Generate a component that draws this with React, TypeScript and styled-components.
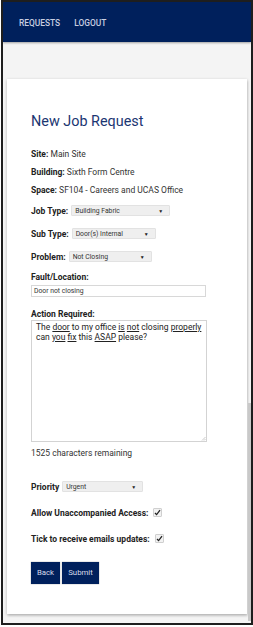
import React from "react";
import styled, { createGlobalStyle } from "styled-components";

const Global = createGlobalStyle`
  html, body { margin: 0; padding: 0; background: #ffffff; }
  body { font-family: Roboto, "Liberation Sans", Arial, sans-serif; }
  * { box-sizing: border-box; }
`;

const Frame = styled.div`
  position: relative;
  margin-left: 1px;
  width: 252px;
  height: 625px;
  border: 2px solid #1e1e1e;
  background: #f4f4f4;
  overflow: hidden;
  display: flex;
  flex-direction: column;
`;

const Thumb = styled.div`
  position: absolute;
  right: 0;
  top: 401px;
  width: 3px;
  bottom: 2px;
  background: #c9c9c9;
`;

const NavBar = styled.nav`
  height: 40px;
  flex: none;
  background: #00205c;
  display: flex;
  align-items: center;
  padding: 1px 0 0 16px;
  gap: 14px;
  box-shadow: 0 1px 2px rgba(0, 0, 0, 0.35);
`;

const NavLink = styled.span`
  color: #c9cee0;
  font-size: 8.4px;
  font-weight: 500;
`;

const Content = styled.main`
  padding: 37px 4px 9px 4px;
  flex: 1;
`;

const Card = styled.section`
  background: #ffffff;
  width: 240px;
  height: 535px;
  padding: 35px 24px 0 24px;
  box-shadow: 0 1px 3px rgba(0, 0, 0, 0.25), 1px 2px 2px rgba(0, 0, 0, 0.08);
  color: #2a2a2a;
`;

const Title = styled.h1`
  margin: 0 0 15px 0;
  font-size: 14.4px;
  line-height: 16px;
  font-weight: 400;
  color: #1b3672;
`;

const InfoRow = styled.div`
  font-size: 8.5px;
  line-height: 18px;
  color: #333;
`;

const B = styled.b`
  font-weight: 700;
  color: #222;
`;

const SelectRow = styled.div`
  display: flex;
  align-items: center;
  height: 23px;
  font-size: 8.5px;
  gap: 3px;
`;

const SelectBox = styled.div<{ $w: number }>`
  width: ${(p) => p.$w}px;
  height: 11px;
  background: #efefef;
  border: 1px solid #e2e2e2;
  border-radius: 1px;
  display: flex;
  align-items: center;
  justify-content: space-between;
  padding: 0 6px 0 3px;
  font-size: 6.8px;
  color: #333;
`;

const Arrow = styled.span`
  font-size: 5px;
  color: #222;
`;

const FieldLabel = styled.div<{ $top: number }>`
  margin-top: ${(p) => p.$top}px;
  font-size: 8.5px;
  line-height: 11px;
  font-weight: 700;
  color: #222;
`;

const TextInput = styled.div`
  margin-top: 1.5px;
  width: 175px;
  height: 12px;
  border: 1px solid #d8d8d8;
  font-size: 6.8px;
  line-height: 10px;
  padding: 0 2px;
  color: #333;
`;

const TextArea = styled.div`
  position: relative;
  width: 176px;
  height: 122px;
  border: 1px solid #d3d3d3;
  padding: 1px 4px;
  font-size: 8.5px;
  line-height: 10px;
  color: #222;
`;

const Grip = styled.svg`
  position: absolute;
  right: 0;
  bottom: 0;
`;

const U = styled.span`
  text-decoration: underline;
  text-underline-offset: 1px;
`;

const Remaining = styled.div`
  margin-top: 4.5px;
  font-size: 8.5px;
  line-height: 12px;
  color: #333;
`;

const PriorityRow = styled(SelectRow)`
  margin-top: 21px;
  height: 14px;
`;

const CheckRow = styled.div<{ $top: number }>`
  margin-top: ${(p) => p.$top}px;
  display: flex;
  align-items: center;
  height: 14px;
  gap: 5px;
  font-size: 8.5px;
  font-weight: 700;
  color: #222;
`;

const Check = styled.span`
  width: 9px;
  height: 9px;
  border: 1px solid #cfcfcf;
  background: #f2f2f2;
  border-radius: 1px;
  display: flex;
  align-items: center;
  justify-content: center;
`;

const Buttons = styled.div`
  margin-top: 16px;
  display: flex;
  gap: 2px;
`;

const Button = styled.button<{ $w: number }>`
  width: ${(p) => p.$w}px;
  height: 22px;
  background: #00205c;
  color: #d6daea;
  border: none;
  padding: 0;
  font-family: Roboto, "Liberation Sans", Arial, sans-serif;
  font-size: 7.8px;
  box-shadow: 0 0 1px rgba(0, 0, 0, 0.5);
`;

const Tick = () => (
  <Check>
    <svg width="7" height="7" viewBox="0 0 7 7">
      <path d="M1 4 L2.6 5.6 L6 1.2" fill="none" stroke="#222" strokeWidth="1.3" />
    </svg>
  </Check>
);

export default function App() {
  return (
    <>
      <Global />
      <Frame>
        <NavBar>
          <NavLink>REQUESTS</NavLink>
          <NavLink>LOGOUT</NavLink>
        </NavBar>
        <Content>
          <Card>
            <Title>New Job Request</Title>
            <InfoRow>
              <B>Site:</B> Main Site
            </InfoRow>
            <InfoRow>
              <B>Building:</B> Sixth Form Centre
            </InfoRow>
            <InfoRow>
              <B>Space:</B> SF104 - Careers and UCAS Office
            </InfoRow>
            <SelectRow>
              <B>Job Type:</B>
              <SelectBox $w={99}>
                Building Fabric<Arrow>▼</Arrow>
              </SelectBox>
            </SelectRow>
            <SelectRow>
              <B>Sub Type:</B>
              <SelectBox $w={84}>
                Door(s) Internal<Arrow>▼</Arrow>
              </SelectBox>
            </SelectRow>
            <SelectRow>
              <B>Problem:</B>
              <SelectBox $w={83}>
                Not Closing<Arrow>▼</Arrow>
              </SelectBox>
            </SelectRow>
            <FieldLabel $top={4}>Fault/Location:</FieldLabel>
            <TextInput>Door not closing</TextInput>
            <FieldLabel $top={12.5}>Action Required:</FieldLabel>
            <TextArea>
              The <U>door</U> to my office <U>is</U> <U>not</U> closing <U>properly</U> can{" "}
              <U>you</U> <U>fix</U> this <U>ASAP</U> please?
              <Grip width="5" height="5" viewBox="0 0 5 5">
                <path d="M4.5 1 L1 4.5 M4.5 3 L3 4.5" stroke="#aaa" strokeWidth="0.6" />
              </Grip>
            </TextArea>
            <Remaining>1525 characters remaining</Remaining>
            <PriorityRow>
              <B>Priority</B>
              <SelectBox $w={81}>
                Urgent<Arrow>▼</Arrow>
              </SelectBox>
            </PriorityRow>
            <CheckRow $top={12}>
              Allow Unaccompanied Access: <Tick />
            </CheckRow>
            <CheckRow $top={12}>
              Tick to receive emails updates: <Tick />
            </CheckRow>
            <Buttons>
              <Button $w={29}>Back</Button>
              <Button $w={37}>Submit</Button>
            </Buttons>
          </Card>
        </Content>
        <Thumb />
      </Frame>
    </>
  );
}
